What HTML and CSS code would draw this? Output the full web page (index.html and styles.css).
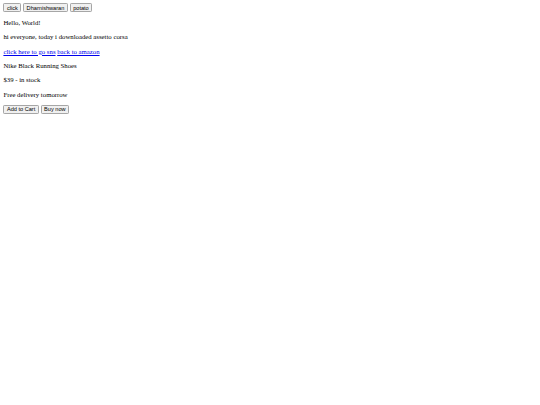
FILE: index.html
```html
<!DOCTYPE html>
<html>
<head>
<meta charset="utf-8">
<link rel="stylesheet" href="styles.css">
</head>
<body>
<div class="toolbar">
<button class="btn">click</button>
<button class="btn">Dharnishwaran</button>
<button class="btn">potato</button>
</div>
<p class="text">Hello, World!</p>
<p class="text">hi everyone, today i downloaded assetto corsa</p>
<p class="text"><a class="link" href="#">click here to go sns</a> <a class="link" href="#">back to amazon</a></p>
<p class="text">Nike Black Running Shoes</p>
<p class="text">$39 - in stock</p>
<p class="text">Free delivery tomorrow</p>
<div class="actions">
<button class="btn">Add to Cart</button>
<button class="btn">Buy now</button>
</div>
</body>
</html>
```
FILE: styles.css
```css
html {
  background: #ffffff;
}
body {
  margin: 3.4px;
  font-family: "Liberation Serif", serif;
  font-size: 6.75px;
  line-height: 7.6px;
  color: #000000;
}
.toolbar,
.actions {
  display: flex;
  gap: 1.8px;
  align-items: center;
}
.text {
  margin: 6.75px 0;
}
.link {
  color: #0000ee;
  text-decoration: underline;
}
.btn {
  font-family: "Liberation Sans", Arial, sans-serif;
  font-size: 5.625px;
  line-height: 6.3px;
  padding: 0.3px 2.5px;
  background: #f0f0f0;
  border: 0.85px solid #a6a6a6;
  border-radius: 1.2px;
  color: #000000;
}
```
